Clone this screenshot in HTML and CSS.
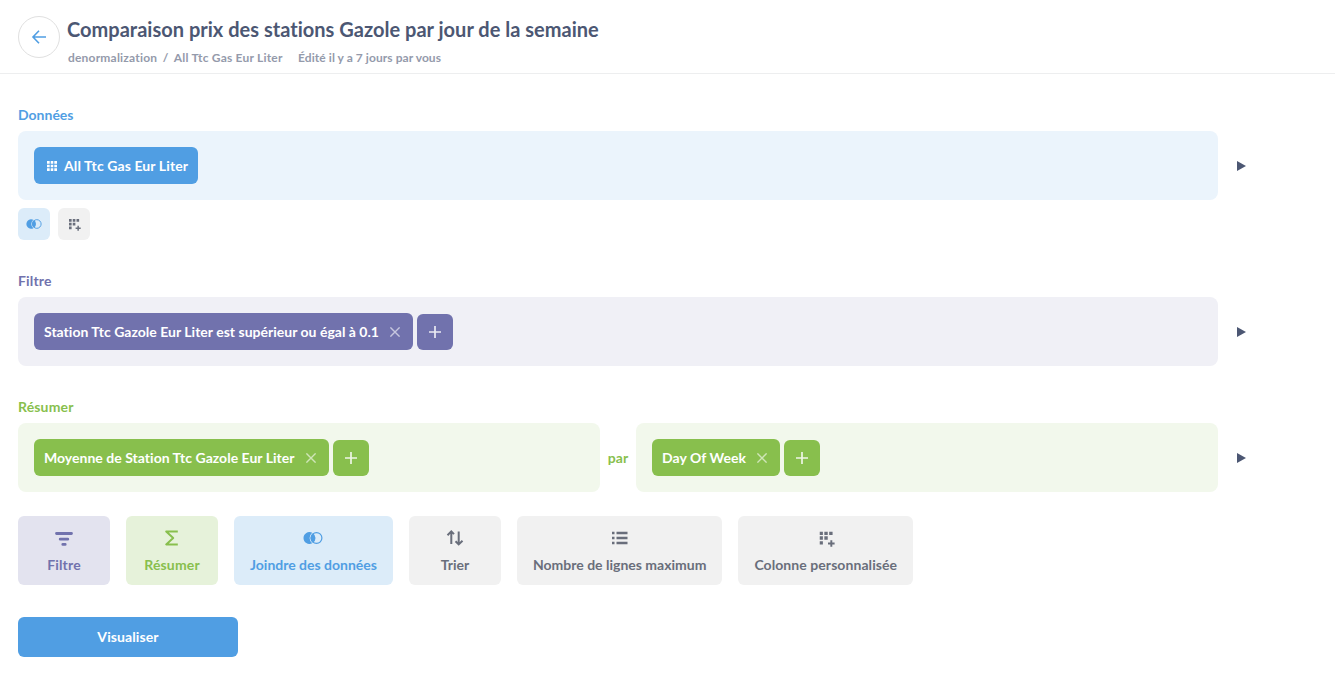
FILE: index.html
```html
<!DOCTYPE html>
<html lang="fr">
<head>
<meta charset="utf-8">
<title>Comparaison prix des stations Gazole par jour de la semaine</title>
<link rel="stylesheet" href="styles.css">
</head>
<body>
<svg class="defs" aria-hidden="true">
  <symbol id="join" viewBox="0 0 20 14">
    <path d="M9.17 1.63A6 6 0 1 0 9.17 12.37A6.9 6.9 0 0 1 9.17 1.63Z" fill="currentColor"/>
    <path d="M10 2.13A6 6 0 0 1 10 11.87A6 6 0 0 1 10 2.13Z" fill="currentColor"/>
    <circle cx="13.5" cy="7" r="5.4" fill="none" stroke="currentColor" stroke-width="1.2"/>
  </symbol>
  <symbol id="column" viewBox="0 0 16 16">
    <path d="M0 0h3.5v3.5H0zM5 0h3.5v3.5H5zM10 0h3.5v3.5H10zM0 5h3.5v3.5H0zM5 5h3.5v3.5H5zM0 10h3.5v3.5H0zM11.2 9h2v2.4h2.4v2h-2.4v2.4h-2v-2.4H8.8v-2h2.4z" fill="currentColor"/>
  </symbol>
  <symbol id="cross" viewBox="0 0 10 10">
    <path d="M.4.4l9.2 9.2M9.6.4L.4 9.6" fill="none" stroke="currentColor" stroke-width="1.4"/>
  </symbol>
  <symbol id="plus" viewBox="0 0 12 12">
    <path d="M6 0v12M0 6h12" fill="none" stroke="currentColor" stroke-width="1.7"/>
  </symbol>
  <symbol id="play" viewBox="0 0 10 10">
    <path d="M1 0L10 5L1 10z" fill="currentColor"/>
  </symbol>
</svg>

<header class="header">
  <a class="back"><svg width="14" height="14" viewBox="0 0 14 14"><path d="M14 7H1.2M7 .8L1 7l6 6.2" fill="none" stroke="currentColor" stroke-width="1.6"/></svg></a>
  <div class="heading">
    <h1 class="title">Comparaison prix des stations Gazole par jour de la semaine</h1>
    <div class="meta"><span class="crumb">denormalization</span><span class="slash">/</span><span class="crumb">All Ttc Gas Eur Liter</span><span class="edited">Édité il y a 7 jours par vous</span></div>
  </div>
</header>

<main class="notebook">
  <section class="step blue">
    <h2 class="label">Données</h2>
    <div class="row">
      <div class="cell"><div class="pill pill-table"><svg width="10" height="10" viewBox="0 0 10 10"><path d="M0 0h2.7v2.7H0zM3.7 0h2.6v2.7H3.7zM7.3 0H10v2.7H7.3zM0 3.7h2.7v2.6H0zM3.7 3.7h2.6v2.6H3.7zM7.3 3.7H10v2.6H7.3zM0 7.3h2.7V10H0zM3.7 7.3h2.6V10H3.7zM7.3 7.3H10V10H7.3z" fill="currentColor"/></svg>All Ttc Gas Eur Liter</div></div>
      <svg class="play"><use href="#play"/></svg>
    </div>
    <div class="small-actions">
      <div class="small join"><svg width="16" height="12"><use href="#join"/></svg></div>
      <div class="small grey"><svg class="small-column"><use href="#column"/></svg></div>
    </div>
  </section>

  <section class="step purple">
    <h2 class="label wide">Filtre</h2>
    <div class="row">
      <div class="cell">
        <div class="pill">Station Ttc Gazole Eur Liter est supérieur ou égal à 0.1<svg class="cross"><use href="#cross"/></svg></div>
        <div class="add"><svg class="plus"><use href="#plus"/></svg></div>
      </div>
      <svg class="play"><use href="#play"/></svg>
    </div>
  </section>

  <section class="step green">
    <h2 class="label wide">Résumer</h2>
    <div class="row">
      <div class="split">
        <div class="cell">
          <div class="pill pill-metric">Moyenne de Station Ttc Gazole Eur Liter<svg class="cross"><use href="#cross"/></svg></div>
          <div class="add"><svg class="plus"><use href="#plus"/></svg></div>
        </div>
        <span class="by">par</span>
        <div class="cell">
          <div class="pill pill-group">Day Of Week<svg class="cross"><use href="#cross"/></svg></div>
          <div class="add"><svg class="plus"><use href="#plus"/></svg></div>
        </div>
      </div>
      <svg class="play"><use href="#play"/></svg>
    </div>
  </section>

  <div class="actions">
    <div class="action filter wide"><svg width="18" height="18" viewBox="0 0 18 18"><path d="M1.5 4.5h15M5.2 10.2h7.6M7.8 15.4h2.4" fill="none" stroke="currentColor" stroke-width="2.8" stroke-linecap="round"/></svg>Filtre</div>
    <div class="action summarize wide"><svg width="18" height="18" viewBox="0 0 18 18"><path d="M14.8 2.6H3.2L10.2 9l-7 6.4h11.6" fill="none" stroke="currentColor" stroke-width="2" stroke-linejoin="round"/></svg>Résumer</div>
    <div class="action join"><svg class="join-icon"><use href="#join"/></svg>Joindre des données</div>
    <div class="action grey"><svg width="18" height="18" viewBox="0 0 18 18"><path d="M5.3 15V3M1.5 6.2l3.8-3.8L8 5.1M12.7 2.5v12.7M9.5 12.2l3.2 3.2 3.8-3.6" fill="none" stroke="currentColor" stroke-width="2"/></svg>Trier</div>
    <div class="action grey"><svg width="18" height="18" viewBox="0 0 18 18"><path d="M1 4h2.5M1 9h2.5M1 14h2.5M5.5 4h11M5.5 9h11M5.5 14h11" fill="none" stroke="currentColor" stroke-width="2.5"/></svg>Nombre de lignes maximum</div>
    <div class="action grey custom"><svg class="column-icon" viewBox="-2.5 -2.5 18 18"><use href="#column" width="15.5" height="15.5"/></svg>Colonne personnalisée</div>
  </div>

  <div class="visualize">Visualiser</div>
</main>
</body>
</html>
```
FILE: styles.css
```css
* { box-sizing: border-box; }
body { margin: 0; background: #fff; font: 700 14px/17px Lato, sans-serif; font-variant-ligatures: none; color: #4c5773; }
svg { display: block; flex: none; overflow: visible; }
.defs { display: none; }

.header { display: flex; height: 74px; padding: 16px 18px 0; border-bottom: 1px solid #edeeef; }
.back { display: flex; align-items: center; justify-content: center; width: 42px; height: 42px; border: 1px solid #e0e0e0; border-radius: 50%; color: #509ee3; }
.heading { padding: 1px 0 0 7px; }
.title { margin: 0; font-size: 20px; line-height: 24px; letter-spacing: .015px; }
.meta { display: flex; padding: 9px 0 0 1px; font-size: 12px; line-height: 15px; color: #949aab; }
.crumb { letter-spacing: .2px; }
.slash { padding: 0 5.5px 0 5.5px; }
.edited { padding-left: 15.5px; letter-spacing: .07px; }

.notebook { padding: 32px 18px; }
.step { margin-bottom: 32px; }
.label { margin: 0 0 8px; font-size: 14px; line-height: 17px; color: var(--c); }
.wide { letter-spacing: .15px; }
.blue { --c: #509ee3; --bg: #ebf4fc; }
.purple { --c: #7172ad; --bg: #f0f0f6; }
.green { --c: #88bf4d; --bg: #f2f8ec; margin-bottom: 24px; }
.row { display: flex; align-items: center; gap: 18px; }
.row > .cell, .split { width: 1200px; }
.split { display: flex; align-items: center; }
.split .cell { width: 582px; }
.by { flex: 1; text-align: center; color: var(--c); }
.cell { display: flex; align-items: flex-end; gap: 4px; height: 69px; padding: 16px; border-radius: 8px; background: var(--bg); }
.pill { display: flex; align-items: center; height: 37px; padding: 0 13px 0 10px; border-radius: 6px; background: var(--c); color: #fff; letter-spacing: .012px; white-space: nowrap; }
.pill-table { gap: 7px; padding: 0 10px 0 13px; letter-spacing: .1px; }
.pill-metric { letter-spacing: .022px; }
.pill-group { letter-spacing: .06px; }
.cross { width: 10px; height: 10px; margin-left: 11px; opacity: .6; }
.add { display: flex; align-items: center; justify-content: center; width: 36px; height: 36px; border-radius: 6px; background: var(--c); color: #fff; }
.plus { width: 12px; height: 12px; opacity: .85; }
.play { width: 10px; height: 10px; }

.small-actions { display: flex; gap: 8px; margin-top: 8px; }
.small { display: flex; align-items: center; justify-content: center; width: 32px; height: 32px; border-radius: 6px; }
.small-column { width: 12px; height: 12px; margin: 1px 0 0 2px; }

.actions { display: flex; gap: 16px; margin-bottom: 32px; }
.action { display: flex; flex-direction: column; align-items: center; gap: 9px; height: 69px; min-width: 92px; padding: 13px 16px 0; border-radius: 6px; white-space: nowrap; }
.custom { letter-spacing: .07px; }
.join-icon { width: 20px; height: 18px; }
.column-icon { width: 18px; height: 18px; }
.filter { background: #e3e3ef; color: #7172ad; }
.summarize { background: #e6f2da; color: #88bf4d; }
.join { background: #dcecf9; color: #509ee3; }
.grey { background: #f1f1f1; color: #696e7b; }

.visualize { display: flex; align-items: center; justify-content: center; width: 220px; height: 40px; padding-bottom: 1px; border-radius: 6px; background: #509ee3; color: #fff; letter-spacing: .1px; }
```
